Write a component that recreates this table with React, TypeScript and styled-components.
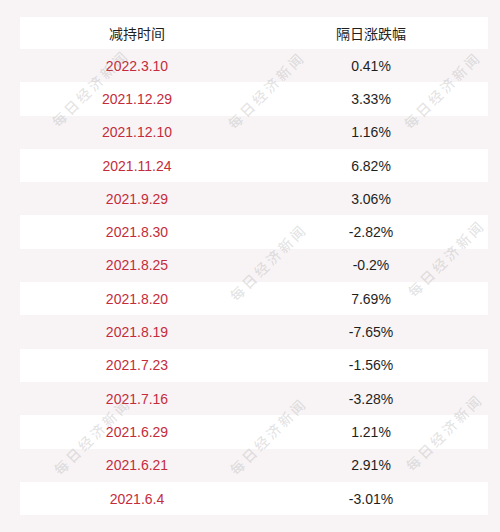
import styled, { createGlobalStyle } from "styled-components";

const rows = [
  ["2022.3.10", "0.41%"],
  ["2021.12.29", "3.33%"],
  ["2021.12.10", "1.16%"],
  ["2021.11.24", "6.82%"],
  ["2021.9.29", "3.06%"],
  ["2021.8.30", "-2.82%"],
  ["2021.8.25", "-0.2%"],
  ["2021.8.20", "7.69%"],
  ["2021.8.19", "-7.65%"],
  ["2021.7.23", "-1.56%"],
  ["2021.7.16", "-3.28%"],
  ["2021.6.29", "1.21%"],
  ["2021.6.21", "2.91%"],
  ["2021.6.4", "-3.01%"],
];

// watermark centres, as seen on the picture
const marks = [
  [90, 88],
  [266, 90],
  [442, 90],
  [268, 262],
  [446, 258],
  [92, 436],
  [268, 436],
  [444, 432],
];

export default function App() {
  return (
    <>
      <Global />
      <Page>
        <Table>
          <Row $white>
            <Cell>减持时间</Cell>
            <Cell>隔日涨跌幅</Cell>
          </Row>
          {rows.map(([date, change], i) => (
            <Row key={date} $white={i % 2 === 1}>
              <Cell $red>{date}</Cell>
              <Cell>{change}</Cell>
            </Row>
          ))}
        </Table>
        {marks.map(([x, y], i) => (
          <Watermark key={i} style={{ left: x, top: y }}>
            每日经济新闻
          </Watermark>
        ))}
      </Page>
    </>
  );
}

const Global = createGlobalStyle`
  html, body {
    margin: 0;
    padding: 0;
    background: #f8f4f5;
  }
`;

const Page = styled.div`
  position: relative;
  width: 500px;
  height: 532px;
  box-sizing: border-box;
  padding: 17px 12px 17px 20px;
  background: #f8f4f5;
  overflow: hidden;
`;

const Table = styled.div`
  display: flex;
  flex-direction: column;
  font-family: "Liberation Sans", Arial, "Noto Sans CJK SC", sans-serif;
  font-size: 14px;
`;

const Row = styled.div<{ $white?: boolean }>`
  display: grid;
  grid-template-columns: 1fr 1fr;
  height: 33.3px;
  align-items: center;
  background: ${(p) => (p.$white ? "#ffffff" : "transparent")};
  &:first-child {
    height: 32px;
  }
`;

const Cell = styled.div<{ $red?: boolean }>`
  text-align: center;
  color: ${(p) => (p.$red ? "#c42c3c" : "#1e1e1e")};
`;

const Watermark = styled.div`
  position: absolute;
  transform: translate(-50%, -50%) rotate(-45deg);
  font-family: "Noto Sans CJK SC", sans-serif;
  font-weight: 500;
  font-size: 14px;
  letter-spacing: 3px;
  white-space: nowrap;
  color: rgba(140, 140, 140, 0.24);
  pointer-events: none;
`;
